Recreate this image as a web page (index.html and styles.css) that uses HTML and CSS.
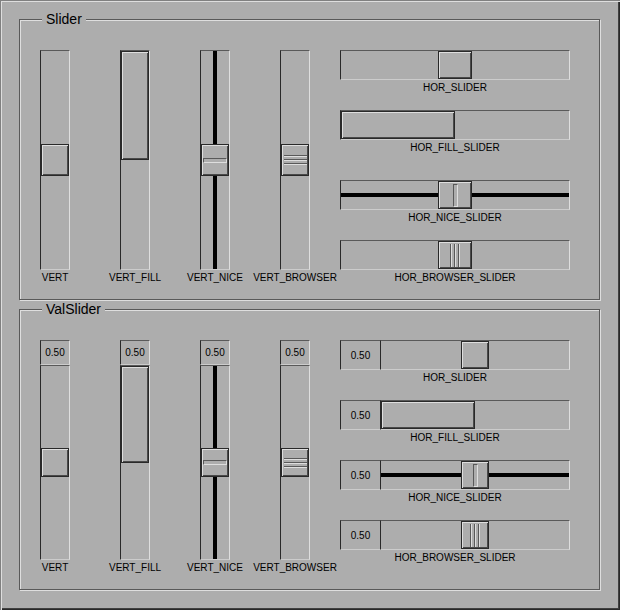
FILE: index.html
```html
<!DOCTYPE html>
<html>
<head>
<meta charset="utf-8">
<link rel="stylesheet" href="styles.css">
</head>
<body>
<div class="window">
  <section class="frame">
    <span class="legend">Slider</span>
    <div class="row">
      <div class="vgroup">
        <div class="vcol">
          <div class="vtrack"><div class="knob vknob"></div></div>
          <div class="lbl">VERT</div>
        </div>
        <div class="vcol">
          <div class="vtrack fill"><div class="knob" style="height:50%"></div></div>
          <div class="lbl">VERT_FILL</div>
        </div>
        <div class="vcol">
          <div class="vtrack nice-v"><div class="knob vknob"><span class="slot-h"></span></div></div>
          <div class="lbl">VERT_NICE</div>
        </div>
        <div class="vcol">
          <div class="vtrack"><div class="knob vknob"><span class="grip-h"></span></div></div>
          <div class="lbl">VERT_BROWSER</div>
        </div>
      </div>
      <div class="hcol">
        <div class="hitem">
          <div class="htrack"><div class="knob hknob"></div></div>
          <div class="lbl">HOR_SLIDER</div>
        </div>
        <div class="hitem tall">
          <div class="htrack fill"><div class="knob" style="width:50%"></div></div>
          <div class="lbl">HOR_FILL_SLIDER</div>
        </div>
        <div class="hitem">
          <div class="htrack nice-h"><div class="knob hknob"><span class="slot-v"></span></div></div>
          <div class="lbl">HOR_NICE_SLIDER</div>
        </div>
        <div class="hitem">
          <div class="htrack"><div class="knob hknob"><span class="grip-v"></span></div></div>
          <div class="lbl">HOR_BROWSER_SLIDER</div>
        </div>
      </div>
    </div>
  </section>

  <section class="frame">
    <span class="legend">ValSlider</span>
    <div class="row">
      <div class="vgroup">
        <div class="vcol">
          <div class="vval">0.50</div>
          <div class="vtrack short"><div class="knob vknob-s"></div></div>
          <div class="lbl">VERT</div>
        </div>
        <div class="vcol">
          <div class="vval">0.50</div>
          <div class="vtrack short fill"><div class="knob" style="height:50%"></div></div>
          <div class="lbl">VERT_FILL</div>
        </div>
        <div class="vcol">
          <div class="vval">0.50</div>
          <div class="vtrack short nice-v"><div class="knob vknob-s"><span class="slot-h"></span></div></div>
          <div class="lbl">VERT_NICE</div>
        </div>
        <div class="vcol">
          <div class="vval">0.50</div>
          <div class="vtrack short"><div class="knob vknob-s"><span class="grip-h"></span></div></div>
          <div class="lbl">VERT_BROWSER</div>
        </div>
      </div>
      <div class="hcol">
        <div class="hitem">
          <div class="hvs"><div class="hval">0.50</div><div class="htrack"><div class="knob hknob-s"></div></div></div>
          <div class="lbl">HOR_SLIDER</div>
        </div>
        <div class="hitem">
          <div class="hvs"><div class="hval">0.50</div><div class="htrack fill"><div class="knob" style="width:50%"></div></div></div>
          <div class="lbl">HOR_FILL_SLIDER</div>
        </div>
        <div class="hitem">
          <div class="hvs"><div class="hval">0.50</div><div class="htrack nice-h"><div class="knob hknob-s"><span class="slot-v"></span></div></div></div>
          <div class="lbl">HOR_NICE_SLIDER</div>
        </div>
        <div class="hitem">
          <div class="hvs"><div class="hval">0.50</div><div class="htrack"><div class="knob hknob-s"><span class="grip-v"></span></div></div></div>
          <div class="lbl">HOR_BROWSER_SLIDER</div>
        </div>
      </div>
    </div>
  </section>
</div>
</body>
</html>
```

FILE: styles.css
```css
html, body {
  margin: 0;
  padding: 0;
  background: #adadad;
}

body {
  font-family: "Liberation Sans", Arial, Helvetica, sans-serif;
  color: #000;
}

.window {
  width: 620px;
  height: 610px;
  box-sizing: border-box;
  padding: 19px 0 0 19px;
  background: #adadad;
  box-shadow: inset 1px 1px 0 #808080, inset 2px 2px 0 #dedede,
              inset -1px -1px 0 #292929, inset -2px -2px 0 #404040;
}

.frame {
  position: relative;
  width: 581px;
  height: 281px;
  box-sizing: border-box;
  border: 1px solid #595959;
  box-shadow: inset 1px 1px 0 #dedede, 1px 1px 0 #dedede;
  padding: 30px 0 0 20px;
}

.frame + .frame {
  margin-top: 9px;
}

.legend {
  position: absolute;
  top: -9px;
  left: 22px;
  padding: 0 4px;
  font-size: 14px;
  line-height: 16px;
  background: #adadad;
}

.row {
  display: flex;
}

.vgroup {
  display: flex;
  gap: 50px;
}

.vcol {
  width: 30px;
  display: flex;
  flex-direction: column;
  align-items: center;
}

.lbl {
  font-size: 10px;
  line-height: 12px;
  margin-top: 2px;
  white-space: nowrap;
}

/* sunken track (down box) */
.vtrack, .htrack, .vval, .hval {
  box-sizing: border-box;
  border-style: solid;
  border-width: 1px;
  border-color: #595959 #dedede #cccccc #292929;
  background-color: #adadad;
}

.vtrack {
  width: 30px;
  height: 220px;
  display: flex;
  flex-direction: column;
  justify-content: center;
}

.vtrack.short {
  height: 195px;
}

.vtrack.fill {
  justify-content: flex-start;
}

.htrack {
  width: 230px;
  height: 30px;
  display: flex;
  justify-content: center;
}

.htrack.fill {
  justify-content: flex-start;
}

.hvs .htrack {
  width: 190px;
}

/* raised knob (up box) */
.knob {
  box-sizing: border-box;
  border: 1px solid #292929;
  box-shadow: inset 1px 1px 0 #dedede, inset -1px -1px 0 #4a4a4a;
  background: #adadad;
  display: flex;
  align-items: center;
  justify-content: center;
}

.vknob { height: 32px; }
.vknob-s { height: 29px; }
.hknob { width: 34px; }
.hknob-s { width: 28px; }

.nice-v {
  background-image: linear-gradient(to right, transparent 12px, #000 12px, #000 16px, transparent 16px);
}

.nice-h {
  background-image: linear-gradient(to bottom, transparent 12px, #000 12px, #000 16px, transparent 16px);
}

.slot-h, .slot-v {
  display: block;
  box-sizing: border-box;
  border-style: solid;
  border-width: 1px;
  border-color: #595959 #dedede #dedede #595959;
}

.slot-h { width: 24px; height: 5px; }
.slot-v { width: 5px; height: 23px; }

.grip-h {
  display: block;
  width: 23px;
  height: 10px;
  background: repeating-linear-gradient(to bottom, #595959 0 1px, #dedede 1px 2px, transparent 2px 4px);
}

.grip-v {
  display: block;
  width: 10px;
  height: 23px;
  background: repeating-linear-gradient(to right, #595959 0 1px, #dedede 1px 2px, transparent 2px 4px);
}

.hcol {
  margin-left: 30px;
  width: 230px;
  display: flex;
  flex-direction: column;
}

.hitem {
  height: 60px;
  display: flex;
  flex-direction: column;
  align-items: center;
}

.hitem.tall {
  height: 70px;
}

.vval {
  width: 30px;
  height: 25px;
  display: flex;
  align-items: center;
  justify-content: center;
  font-size: 10px;
}

.hvs {
  display: flex;
  width: 230px;
  height: 30px;
}

.hval {
  width: 40px;
  height: 30px;
  border-right-width: 0;
  display: flex;
  align-items: center;
  justify-content: center;
  font-size: 10px;
}
```
